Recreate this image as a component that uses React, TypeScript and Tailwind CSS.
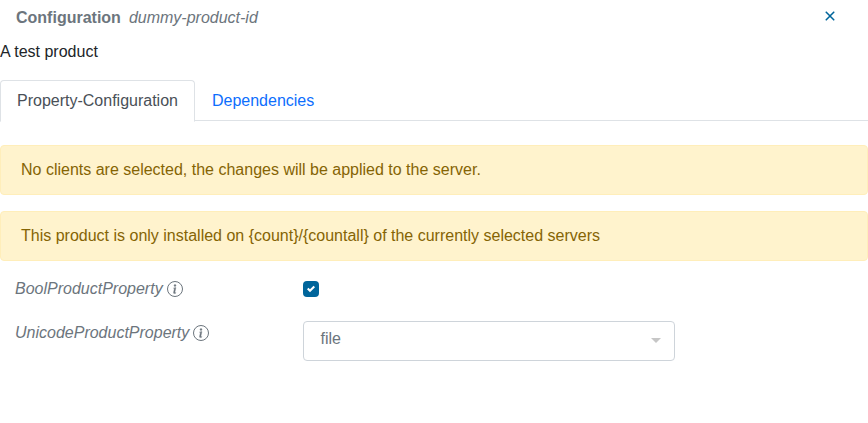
import { BsX } from "react-icons/bs";
import type { ReactNode } from "react";

function Alert({ children }: { children: ReactNode }) {
  return (
    <div className="mb-4 h-[50px] rounded-[4px] border border-[#ffeeba] bg-[#fff3cd] px-5 py-3 text-[#856404]">
      {children}
    </div>
  );
}

function InfoIcon() {
  return (
    <svg viewBox="0 0 16 16" className="size-4" fill="currentColor" aria-hidden="true">
      <circle cx="8" cy="8" r="7.5" fill="none" stroke="currentColor" strokeWidth="1" />
      <g stroke="currentColor" strokeWidth="0.35">
        <path d="M8.93 6.588l-2.29.287-.082.38.45.083c.294.07.352.176.288.469l-.738 3.468c-.194.897.105 1.319.808 1.319.545 0 1.178-.252 1.465-.598l.088-.416c-.2.176-.492.246-.686.246-.275 0-.375-.193-.304-.533L8.93 6.588z" />
        <circle cx="8" cy="4.5" r="1" />
      </g>
    </svg>
  );
}

function PropertyLabel({ name }: { name: string }) {
  return (
    <div className="flex w-[288px] items-center gap-1 italic leading-6">
      <span>{name}</span>
      <InfoIcon />
    </div>
  );
}

export default function App() {
  return (
    <div className="h-[423px] w-full overflow-hidden bg-white font-['Liberation_Sans',Arial,sans-serif] text-base leading-6 text-[#6c757d]">
      <header className="flex h-10 items-start justify-between pl-4 pr-7 pt-1.5">
        <div className="flex">
          <span className="mr-2 font-bold">Configuration</span>
          <span className="italic">dummy-product-id</span>
        </div>
        <button type="button" aria-label="Close" className="text-[#00659b]">
          <BsX className="size-5" strokeWidth={0.2} />
        </button>
      </header>

      <p className="mb-4 text-[#212529]">A test product</p>

      <nav className="mb-6 flex h-[41px] border-b border-[#dee2e6]">
        <a className="h-[42px] rounded-t-[4px] border border-b-white border-[#dee2e6] bg-white px-4 py-2 text-[#495057]">
          Property-Configuration
        </a>
        <a className="px-[17px] py-[9px] text-[#0d6efd]">Dependencies</a>
      </nav>

      <Alert>No clients are selected, the changes will be applied to the server.</Alert>
      <Alert>
        This product is only installed on {"{count}/{countall}"} of the currently selected servers
      </Alert>

      <div className="flex h-11 items-start pl-[15px]">
        <PropertyLabel name="BoolProductProperty" />
        <div
          role="checkbox"
          aria-checked="true"
          className="mt-1 flex size-4 items-center justify-center rounded-[4px] bg-[#00659b]"
        >
          <svg viewBox="0 0 8 8" className="size-2" fill="#fff">
            <path d="M6.564.75l-3.59 3.612-1.538-1.55L0 4.26l2.974 2.99L8 2.193z" />
          </svg>
        </div>
      </div>

      <div className="flex items-start pl-[15px]">
        <PropertyLabel name="UnicodeProductProperty" />
        <div className="flex h-10 w-[372px] items-start justify-between rounded-[4px] border border-[#ced4da] pl-4 pr-[13px] pt-[5px]">
          <span className="pl-[0.5px]">file</span>
          <span className="mt-[11px] border-x-[5px] border-t-[5px] border-x-transparent border-t-[#c6c6c6]" />
        </div>
      </div>
    </div>
  );
}
